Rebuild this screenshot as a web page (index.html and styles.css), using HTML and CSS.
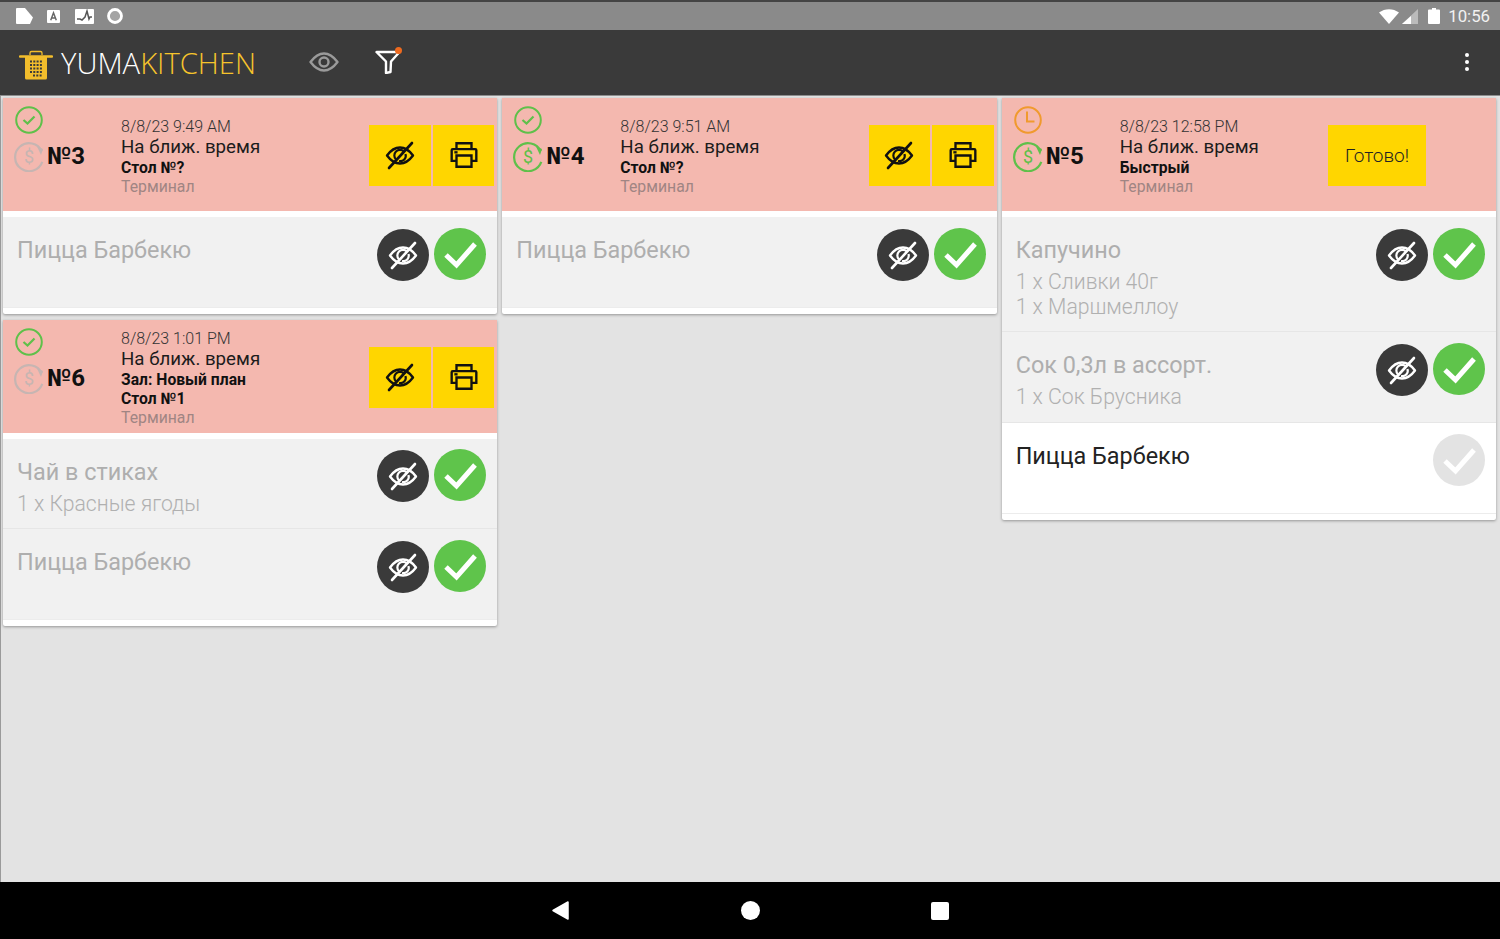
FILE: index.html
```html
<!DOCTYPE html>
<html lang="ru">
<head>
<meta charset="utf-8">
<title>YumaKitchen</title>
<link rel="stylesheet" href="styles.css">
</head>
<body>
<svg class="sprite" xmlns="http://www.w3.org/2000/svg">
  <symbol id="eye-off" viewBox="0 0 30 30">
    <path d="M2 15.500C6 10 10.500 7.500 15 7.500s9 2.500 13 8C24 21 19.500 23.500 15 23.500S6 21 2 15.500Z" fill="none" stroke="currentColor" stroke-width="2.400" stroke-linejoin="round"/>
    <path d="M11 19.500A5.500 5.500 0 0 1 19 11.500M20.500 14A5.500 5.500 0 0 1 14 21" fill="none" stroke="currentColor" stroke-width="2.200"/>
    <path d="M4 28 27 3" fill="none" stroke="currentColor" stroke-width="2.600" stroke-linecap="round"/>
  </symbol>
  <symbol id="printer" viewBox="1 2 28 27">
    <path d="M8 10V4.500h14V10M8 21H3.500V11a1 1 0 0 1 1-1h21a1 1 0 0 1 1 1v10H22" fill="none" stroke="currentColor" stroke-width="2.200"/>
    <path d="M8 16h14v10.500H8z" fill="none" stroke="currentColor" stroke-width="2.200"/>
    <path d="M6 13h3" stroke="currentColor" stroke-width="2.200"/>
  </symbol>
  <symbol id="check" viewBox="0 0 52 52">
    <path d="M12 27 22.500 37 41 16" fill="none" stroke="currentColor" stroke-width="5"/>
  </symbol>
  <symbol id="ok-ring" viewBox="0 0 28 28">
    <circle cx="14" cy="14" r="12.800" fill="none" stroke="currentColor" stroke-width="2"/>
    <path d="M8.500 14 12.500 17.500 19.500 10.500" fill="none" stroke="currentColor" stroke-width="2.200"/>
  </symbol>
  <symbol id="clock-ring" viewBox="0 0 28 28">
    <circle cx="14" cy="14" r="12.800" fill="none" stroke="currentColor" stroke-width="2"/>
    <path d="M13 5.500V15.500H20.500" fill="none" stroke="currentColor" stroke-width="2"/>
  </symbol>
  <symbol id="money" viewBox="0 0 32 32">
    <path d="M28 9.500A14 14 0 1 0 30 20" fill="none" stroke="currentColor" stroke-width="2.200" transform="rotate(8 16 16)"/>
    <path d="M24 6.500 30 9 28 15" fill="currentColor"/>
    <text x="16" y="23" text-anchor="middle" class="money-sign" fill="currentColor">$</text>
  </symbol>
</svg>

<header class="status-bar">
  <div class="status-left">
    <svg class="st-file" viewBox="0 0 17 16"><path d="M1 0h8l8 9.500-3 6.500H1a1 1 0 0 1-1-1V1a1 1 0 0 1 1-1Z" fill="#fff"/></svg>
    <svg class="st-a" viewBox="0 0 14 14"><rect width="14" height="14" rx="1" fill="#fff"/><path d="M4 11 7 3l3 8M5 8.500h4" fill="none" stroke="#666" stroke-width="1.600"/></svg>
    <svg class="st-chart" viewBox="0 0 19 15"><rect width="19" height="15" rx="1" fill="#fff"/><path d="M2 10h3l2 1 3-3 2-6 2 8 1-2h2" fill="none" stroke="#555" stroke-width="1.500"/></svg>
    <svg class="st-dot" viewBox="0 0 16 16"><circle cx="8" cy="8" r="6.500" fill="#a4a4a4" stroke="#fff" stroke-width="2.800"/></svg>
  </div>
  <div class="status-right">
    <svg class="st-wifi" viewBox="0 0 20 15"><path d="M0 3.500C6 -1 14 -1 20 3.500L10 15Z" fill="#fff"/></svg>
    <svg class="st-signal" viewBox="0 0 16 15"><path d="M16 0V15H0Z" fill="#bbb"/><path d="M9 7V15H0L9 7Z" fill="#fff"/></svg>
    <svg class="st-battery" viewBox="0 0 12 16"><path d="M4 0h4v1.500h3a1 1 0 0 1 1 1V15a1 1 0 0 1-1 1H1a1 1 0 0 1-1-1V2.500a1 1 0 0 1 1-1h3Z" fill="#fff"/></svg>
    <span class="clock">10:56</span>
  </div>
</header>

<nav class="app-bar">
  <svg class="logo-pot" viewBox="0 0 34 30">
    <path d="M11 5V3a1.500 1.500 0 0 1 1.500-1.500h9A1.500 1.500 0 0 1 23 3v2" fill="none" stroke="#f2bd2c" stroke-width="1.300"/>
    <path d="M1 6.500h32" stroke="#f2bd2c" stroke-width="2.400" stroke-linecap="round"/>
    <path d="M6 6h22v22a1.500 1.500 0 0 1-1.500 1.500h-19A1.500 1.500 0 0 1 6 28Z" fill="#f2bd2c"/>
    <path d="M11 11.500h12M11 15h12M11 18.500h12M11 22h12M14 25.500h9" stroke="#3a3a3a" stroke-width="1.800" stroke-dasharray="2 1.300"/>
  </svg>
  <div class="brand"><span class="brand-a">YUMA</span><span class="brand-b">KITCHEN</span></div>
  <svg class="bar-eye" viewBox="0 0 30 20">
    <path d="M1.500 10C6 4 10.500 1.500 15 1.500S24 4 28.500 10C24 16 19.500 18.500 15 18.500S6 16 1.500 10Z" fill="none" stroke="#9a9a9a" stroke-width="2.400" stroke-linejoin="round"/>
    <circle cx="15" cy="10" r="4.500" fill="none" stroke="#9a9a9a" stroke-width="2.400"/>
  </svg>
  <div class="filter">
    <svg class="filter-icon" viewBox="0 0 26 24"><path d="M1.500 2h23L16 11.500 15.500 22 11 23V11.500Z" fill="none" stroke="#fff" stroke-width="2.400" stroke-linejoin="round"/></svg>
    <span class="filter-dot"></span>
  </div>
  <div class="kebab"><i></i><i></i><i></i></div>
</nav>

<main class="board">
  <section class="column">
    <article class="card">
      <div class="card-head">
        <div class="ids">
          <svg class="ring ok"><use href="#ok-ring"/></svg>
          <div class="num-row"><svg class="coin muted"><use href="#money"/></svg><b class="num">№3</b></div>
        </div>
        <div class="info">
          <div class="date">8/8/23 9:49 AM</div>
          <div class="when">На ближ. время</div>
          <div class="place">Стол №?</div>
          <div class="source">Терминал</div>
        </div>
        <div class="head-actions">
          <button class="y-btn"><svg><use href="#eye-off"/></svg></button>
          <button class="y-btn"><svg><use href="#printer"/></svg></button>
        </div>
      </div>
      <div class="item">
        <div class="item-text"><div class="title">Пицца Барбекю</div></div>
        <div class="item-actions">
          <span class="circle dark"><svg><use href="#eye-off"/></svg></span>
          <span class="circle green"><svg><use href="#check"/></svg></span>
        </div>
      </div>
    </article>

    <article class="card">
      <div class="card-head">
        <div class="ids">
          <svg class="ring ok"><use href="#ok-ring"/></svg>
          <div class="num-row"><svg class="coin muted"><use href="#money"/></svg><b class="num">№6</b></div>
        </div>
        <div class="info">
          <div class="date">8/8/23 1:01 PM</div>
          <div class="when">На ближ. время</div>
          <div class="place">Зал: Новый план</div>
          <div class="place">Стол №1</div>
          <div class="source">Терминал</div>
        </div>
        <div class="head-actions">
          <button class="y-btn"><svg><use href="#eye-off"/></svg></button>
          <button class="y-btn"><svg><use href="#printer"/></svg></button>
        </div>
      </div>
      <div class="item short">
        <div class="item-text"><div class="title">Чай в стиках</div><div class="sub">1 x Красные ягоды</div></div>
        <div class="item-actions">
          <span class="circle dark"><svg><use href="#eye-off"/></svg></span>
          <span class="circle green"><svg><use href="#check"/></svg></span>
        </div>
      </div>
      <div class="item">
        <div class="item-text"><div class="title">Пицца Барбекю</div></div>
        <div class="item-actions">
          <span class="circle dark"><svg><use href="#eye-off"/></svg></span>
          <span class="circle green"><svg><use href="#check"/></svg></span>
        </div>
      </div>
    </article>
  </section>

  <section class="column">
    <article class="card">
      <div class="card-head">
        <div class="ids">
          <svg class="ring ok"><use href="#ok-ring"/></svg>
          <div class="num-row"><svg class="coin paid"><use href="#money"/></svg><b class="num">№4</b></div>
        </div>
        <div class="info">
          <div class="date">8/8/23 9:51 AM</div>
          <div class="when">На ближ. время</div>
          <div class="place">Стол №?</div>
          <div class="source">Терминал</div>
        </div>
        <div class="head-actions">
          <button class="y-btn"><svg><use href="#eye-off"/></svg></button>
          <button class="y-btn"><svg><use href="#printer"/></svg></button>
        </div>
      </div>
      <div class="item">
        <div class="item-text"><div class="title">Пицца Барбекю</div></div>
        <div class="item-actions">
          <span class="circle dark"><svg><use href="#eye-off"/></svg></span>
          <span class="circle green"><svg><use href="#check"/></svg></span>
        </div>
      </div>
    </article>
  </section>

  <section class="column">
    <article class="card">
      <div class="card-head">
        <div class="ids">
          <svg class="ring wait"><use href="#clock-ring"/></svg>
          <div class="num-row"><svg class="coin paid"><use href="#money"/></svg><b class="num">№5</b></div>
        </div>
        <div class="info">
          <div class="date">8/8/23 12:58 PM</div>
          <div class="when">На ближ. время</div>
          <div class="place">Быстрый</div>
          <div class="source">Терминал</div>
        </div>
        <div class="head-actions ready-wrap">
          <button class="y-btn ready">Готово!</button>
        </div>
      </div>
      <div class="item">
        <div class="item-text"><div class="title">Капучино</div><div class="sub">1 x Сливки 40г</div><div class="sub">1 x Маршмеллоу</div></div>
        <div class="item-actions">
          <span class="circle dark"><svg><use href="#eye-off"/></svg></span>
          <span class="circle green"><svg><use href="#check"/></svg></span>
        </div>
      </div>
      <div class="item">
        <div class="item-text"><div class="title">Сок 0,3л в ассорт.</div><div class="sub">1 x Сок Брусника</div></div>
        <div class="item-actions">
          <span class="circle dark"><svg><use href="#eye-off"/></svg></span>
          <span class="circle green"><svg><use href="#check"/></svg></span>
        </div>
      </div>
      <div class="item active">
        <div class="item-text"><div class="title">Пицца Барбекю</div></div>
        <div class="item-actions">
          <span class="circle off"><svg><use href="#check"/></svg></span>
        </div>
      </div>
    </article>
  </section>
</main>

<footer class="nav-bar">
  <span class="nav-cell"><svg class="nav-back" viewBox="0 0 17 19"><path d="M16 1V18L1 9.500Z" fill="#fff" stroke="#fff" stroke-width="1.500" stroke-linejoin="round"/></svg></span>
  <span class="nav-cell"><span class="nav-home"></span></span>
  <span class="nav-cell"><span class="nav-recent"></span></span>
</footer>
</body>
</html>
```
FILE: styles.css
```css
* { box-sizing: border-box; }
html, body { margin: 0; height: 100%; }
body {
  width: 1500px;
  height: 939px;
  overflow: hidden;
  display: flex;
  flex-direction: column;
  font-family: Roboto, "Noto Sans", sans-serif;
  background: #e3e3e3;
}
.sprite { display: none; }
.money-sign { font-family: Roboto, sans-serif; font-size: 18px; font-weight: 400; }

/* status bar */
.status-bar {
  height: 30px;
  flex: none;
  background: #8a8a8a;
  border-top: 2px solid #444;
  display: flex;
  justify-content: space-between;
  align-items: center;
  padding: 0 10px 0 16px;
}
.status-left, .status-right { display: flex; align-items: center; }
.st-file { width: 17px; height: 16px; margin-right: 14px; }
.st-a { width: 13px; height: 13px; margin-right: 15px; }
.st-chart { width: 19px; height: 15px; margin-right: 13px; }
.st-dot { width: 16px; height: 16px; }
.st-wifi { width: 20px; height: 15px; margin-right: 3px; }
.st-signal { width: 16px; height: 15px; margin-right: 10px; }
.st-battery { width: 12px; height: 16px; margin-right: 8px; }
.clock { color: #f2f2f2; font-size: 16.8px; line-height: 20px; }

/* app bar */
.app-bar {
  height: 66px;
  flex: none;
  background: #3a3a3a;
  border-bottom: 1px solid #8d8d8d;
  display: flex;
  align-items: center;
  padding: 0 31px 0 19px;
}
.logo-pot { width: 34px; height: 30px; margin-top: 4px; }
.brand {
  width: 197px;
  margin-left: 8px;
  font-family: "Open Sans", sans-serif;
  font-weight: 300;
  font-size: 29.2px;
  line-height: 40px;
  white-space: nowrap;
}
.brand-a { color: #fff; }
.brand-b { color: #f6c42c; }
.bar-eye { width: 30px; height: 20px; margin-left: 51px; margin-top: -2px; }
.filter { position: relative; width: 26px; height: 24px; margin-left: 36px; margin-top: -1px; }
.filter-icon { width: 26px; height: 24px; display: block; }
.filter-dot {
  position: absolute;
  top: -3px;
  right: -1px;
  width: 7px;
  height: 7px;
  border-radius: 50%;
  background: #ee6a1f;
}
.kebab { margin-left: auto; display: flex; flex-direction: column; gap: 3px; margin-top: -1px; }
.kebab i { display: block; width: 4px; height: 4px; border-radius: 50%; background: #fff; }

/* board */
.board {
  flex: 1;
  min-height: 0;
  display: flex;
  gap: 5px;
  padding: 2px 4px 0 2px;
  border-left: 1px solid #9a9a9a;
}
.column { flex: 1 1 0; min-width: 0; display: flex; flex-direction: column; gap: 6px; align-items: stretch; }
.card {
  background: #fff;
  padding-bottom: 6px;
  border-radius: 0 0 2px 2px;
  box-shadow: 0 1px 3px rgba(0, 0, 0, 0.35);
}
.card-head {
  min-height: 113px;
  background: #f4b8af;
  display: flex;
  align-items: center;
  margin-bottom: 6px;
  padding-right: 3px;
}
.ids { width: 118px; flex: none; align-self: flex-start; padding: 8px 0 0 12px; }
.ring { width: 28px; height: 28px; display: block; }
.ring.ok { color: #5fc04a; }
.ring.wait { color: #f09a2e; }
.num-row { display: flex; align-items: center; margin-top: 6px; }
.coin { width: 32px; height: 32px; flex: none; margin-left: -2px; }
.coin.muted { color: #c6b5b2; }
.coin.paid { color: #5fc04a; }
.num { font-size: 24px; font-weight: 700; color: #111; margin-left: 2px; line-height: 32px; }
.info { flex: 1; min-width: 0; padding-top: 3px; }
.date { font-size: 16px; line-height: 20px; font-weight: 300; color: #333; }
.when { font-size: 18.7px; line-height: 21px; color: #1c1c1c; }
.place { font-size: 15.7px; line-height: 19px; font-weight: 700; color: #111; }
.source { font-size: 15.8px; line-height: 19px; color: #a08583; }
.head-actions { display: flex; gap: 2px; flex: none; margin-top: 1px; }
.ready-wrap { margin-right: 67px; }
.y-btn {
  width: 61.500px;
  height: 61px;
  border: 0;
  padding: 0;
  background: #ffd600;
  color: #111;
  display: flex;
  align-items: center;
  justify-content: center;
  font-family: inherit;
}
.y-btn svg { width: 30px; height: 30px; }
.ready { width: 98px; font-size: 19px; font-weight: 300; color: #222; }

/* items */
.item {
  min-height: 91px;
  background: #f1f1f1;
  display: flex;
  justify-content: space-between;
  align-items: flex-start;
  padding: 11px 11px 12px 14px;
  border-bottom: 1px solid #e6e6e6;
}
.item.short { min-height: 90px; padding-top: 10px; }
.item.short .item-text { padding-top: 10px; }
.item:last-child { border-bottom-color: #ececec; }
.item.active { background: #fff; }
.item-text { padding-top: 9px; }
.title { font-size: 23.4px; line-height: 26px; color: #aeaeae; }
.sub { font-size: 21.2px; line-height: 25px; font-weight: 300; color: #b0b0b0; }
.title + .sub { margin-top: 6px; }
.active .title { color: #222; }
.item-actions { display: flex; gap: 5px; align-items: flex-start; }
.circle {
  width: 52px;
  height: 52px;
  border-radius: 50%;
  display: flex;
  align-items: center;
  justify-content: center;
  color: #fff;
}
.circle svg { width: 30px; height: 30px; }
.circle.green svg, .circle.off svg { width: 52px; height: 52px; }
.dark { background: #3a3a3a; margin-top: 1px; }
.green { background: #5fc44b; }
.off { background: #e3e3e3; }

/* nav bar */
.nav-bar {
  height: 57px;
  flex: none;
  background: #000;
  display: flex;
  justify-content: center;
  align-items: center;
}
.nav-cell { width: 190px; display: flex; justify-content: center; align-items: center; }
.nav-back { width: 17px; height: 19px; }
.nav-home { width: 19px; height: 19px; border-radius: 50%; background: #fff; }
.nav-recent { width: 18px; height: 18px; border-radius: 2px; background: #fff; }
```
